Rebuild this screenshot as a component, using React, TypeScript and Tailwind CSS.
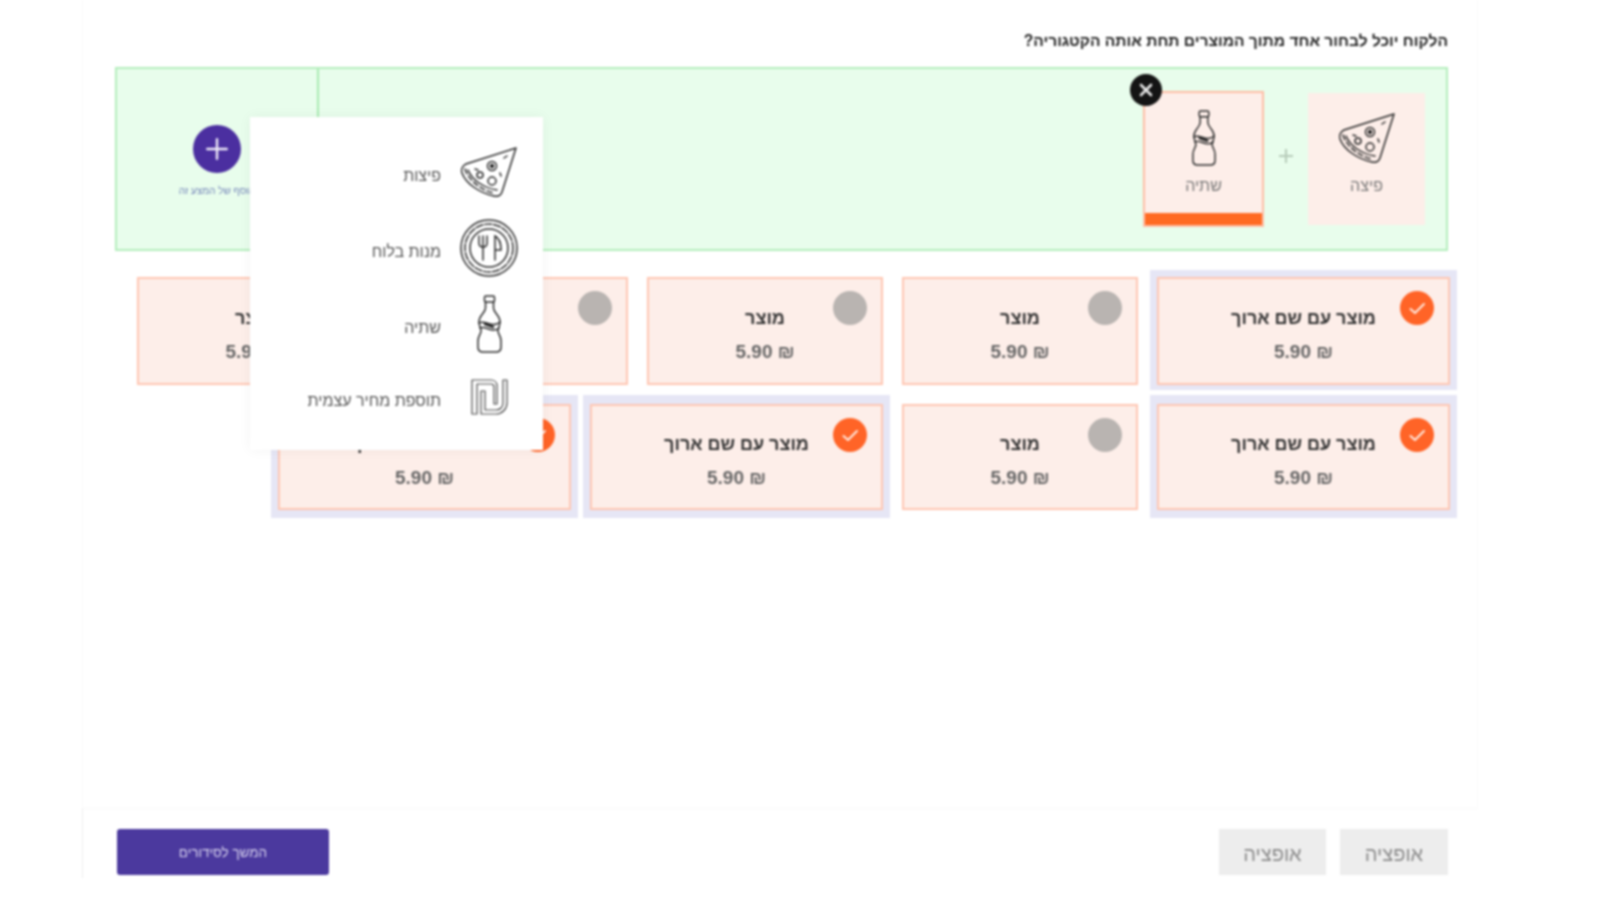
import React from 'react';

const PizzaIcon = ({ className }: { className?: string }) => (
    <svg viewBox="0 0 58 52" fill="none" stroke="#2b2b2b" strokeWidth="1.5" strokeLinejoin="round" strokeLinecap="round" className={className}>
        <path d="M56 2 L6 18 C2 20 1 24 2 27 C6 38 20 47 34 50 C38 51 41 49 42 46 Z" />
        <path d="M8 24 C12 34 24 42 37 44" />
        <path d="M5 23 C8 33 20 44 34 47" strokeDasharray="5 3" />
        <circle cx="32" cy="20" r="4.5" />
        <circle cx="32" cy="20" r="1.5" fill="#2b2b2b" />
        <circle cx="20" cy="29" r="3" />
        <circle cx="32" cy="35" r="4" />
        <path d="M44 12 l3 -2 M15 23 l3 1 M40 27 l1 3" />
    </svg>
);

const BottleIcon = ({ className }: { className?: string }) => (
    <svg viewBox="0 0 27 58" fill="none" stroke="#2b2b2b" strokeWidth="1.5" strokeLinejoin="round" strokeLinecap="round" className={className}>
        <rect x="8.5" y="1" width="10" height="6" rx="1.5" />
        <path d="M9.5 7 V13 C9.5 18 3 20 3 27 C3 31 5 33 5 36 C5 39 2 41 2 46 V52 C2 55 4 57 7 57 H20 C23 57 25 55 25 52 V46 C25 41 22 39 22 36 C22 33 24 31 24 27 C24 20 17.5 18 17.5 13 V7" />
        <path d="M3 28 C9 24 16 34 24 27 M4 33 C10 30 16 39 23 33" />
        <path d="M9 29 l8 3" strokeWidth="2.5" />
    </svg>
);

const PlateIcon = ({ className }: { className?: string }) => (
    <svg viewBox="0 0 60 58" fill="none" stroke="#2b2b2b" strokeWidth="1.5" strokeLinecap="round" className={className}>
        <circle cx="30" cy="29" r="28" />
        <circle cx="30" cy="29" r="24" strokeDasharray="7 2" />
        <circle cx="30" cy="29" r="19" />
        <path d="M20 17 V24 C20 27 22 28 24 28 C26 28 28 27 28 24 V17 M24 17 V41" />
        <path d="M36 41 V17 C40 19 42 24 42 31 H36" />
    </svg>
);

const ShekelIcon = ({ className }: { className?: string }) => (
    <svg viewBox="0 0 37 36" fill="none" stroke="#4a4a4a" strokeWidth="1.2" strokeLinejoin="round" className={className}>
        <path d="M1 35 V1 H20 C24 1 26 4 26 7 V25 H23 V8 C23 6 22 5 20 5 H6 V35 Z" />
        <path d="M36 1 V24 C36 30 31 35 25 35 H10 V12 H14 V31 H25 C29 31 32 28 32 24 V1 Z" />
    </svg>
);

const CheckBadge = ({ selected }: { selected: boolean }) =>
    selected ? (
        <span className="absolute right-[14px] top-[12px] flex h-[34px] w-[34px] items-center justify-center rounded-full bg-[#ff6427]">
            <svg viewBox="0 0 20 20" fill="none" stroke="#ffe9df" strokeWidth="2" strokeLinecap="round" strokeLinejoin="round" className="h-[20px] w-[20px]">
                <path d="M3.5 11 L8 15 L17 6" />
            </svg>
        </span>
    ) : (
        <span className="absolute right-[14px] top-[12px] h-[34px] w-[34px] rounded-full bg-[#b9b4b1]" />
    );

const ProductCard = ({ selected, rowClass, bodyClass }: { selected: boolean; rowClass: string; bodyClass: string }) => (
    <div className={`${rowClass} px-[7px] ${selected ? 'bg-[#e6e6f5]' : ''}`}>
        <div className={`relative flex h-full flex-col items-center border-2 border-[#ffc6b2] bg-[#fdeee9] ${bodyClass} ${selected ? 'w-[293px]' : 'w-[236px]'}`}>
            <CheckBadge selected={selected} />
            <span className="text-lg leading-6 font-semibold text-[#333333]">{selected ? 'מוצר עם שם ארוך' : 'מוצר'}</span>
            <span className="mt-[10px] text-[19px] leading-6 font-semibold text-[#666666]">₪ 5.90</span>
        </div>
    </div>
);

const menuItems = [
    { label: 'פיצות', icon: <PizzaIcon className="h-[52px] w-[58px]" />, rowClass: 'h-[76px]' },
    { label: 'מנות בלוח', icon: <PlateIcon className="h-[58px] w-[60px]" />, rowClass: 'h-[76px]' },
    { label: 'שתיה', icon: <BottleIcon className="h-[58px] w-[27px]" />, rowClass: 'h-[76px]' },
    { label: 'תוספת מחיר עצמית', icon: <ShekelIcon className="h-[36px] w-[37px]" />, rowClass: 'h-[70px]' },
];

const AddMenu = () => (
    <div className="absolute left-[250px] top-[117px] h-[333px] w-[293px] bg-white pr-[24px] pt-[17px] shadow-[0_0_12px_rgba(0,0,0,0.05)]">
        {menuItems.map((item) => (
            <div key={item.label} dir="rtl" className={`flex items-center ${item.rowClass}`}>
                <div className="flex w-[60px] justify-center">{item.icon}</div>
                <span className="mr-[18px] mt-[8px] text-base text-[#555555]">{item.label}</span>
            </div>
        ))}
    </div>
);

export default function App() {
    const firstRow = 'h-[120px] pb-[5px] pt-[7px]';
    const secondRow = 'h-[123px] pb-[8px] pt-[9px]';
    return (
        <div className="relative h-[900px] w-[1600px] overflow-hidden bg-white font-['Liberation_Sans',sans-serif] blur-[1px]">
            <main className="ml-[82px] h-[808px] w-[1396px] border-x border-[#fafafa] pl-[32px] pr-[29px] pt-[29px]">
                <h1 dir="rtl" className="text-[15.6px] leading-6 font-semibold text-[#222222]">
                    הלקוח יוכל לבחור אחד מתוך המוצרים תחת אותה הקטגוריה?
                </h1>
                <section className="mt-[14px] flex h-[184px] border-2 border-[#b4eebc] bg-[#e8fdec]">
                    <div className="flex w-[202px] shrink-0 flex-col items-center border-r-2 border-[#a8eab1] pt-[56px]">
                        <span className="flex h-[48px] w-[48px] items-center justify-center rounded-full bg-[#4b2fa0]">
                            <svg viewBox="0 0 24 24" fill="none" stroke="#eeeaf8" strokeWidth="2.2" strokeLinecap="round" className="h-[26px] w-[26px]">
                                <path d="M12 3 V21 M3 12 H21" />
                            </svg>
                        </span>
                        <span dir="rtl" className="mt-[10px] text-[10px] leading-4 text-[#7383b8]">הוסף של המצע זה</span>
                    </div>
                    <div dir="rtl" className="flex flex-1 items-center pr-[21px]">
                        <div className="flex h-[132px] w-[117px] flex-col items-center bg-[#fdeee9] pt-[19px]">
                            <PizzaIcon className="h-[52px] w-[58px]" />
                            <span className="mt-[10px] text-base text-[#777777]">פיצה</span>
                        </div>
                        <svg viewBox="0 0 16 16" fill="none" stroke="#b6cbb9" strokeWidth="2" className="mx-[14px] -mt-[6px] h-[16px] w-[16px]">
                            <path d="M8 1 V15 M1 8 H15" />
                        </svg>
                        <div className="relative flex h-[136px] w-[121px] flex-col items-center border-2 border-[#ffbda5] bg-[#fdeee9] pt-[17px]">
                            <BottleIcon className="h-[56px] w-[26px]" />
                            <span className="mt-[8px] text-base text-[#777777]">שתיה</span>
                            <span className="absolute inset-x-0 bottom-0 h-[12px] bg-[#ff6a22]" />
                            <span className="absolute -left-[15px] -top-[19px] flex h-[32px] w-[32px] items-center justify-center rounded-full bg-[#141414]">
                                <svg viewBox="0 0 16 16" fill="none" stroke="#e8e8e8" strokeWidth="2.6" strokeLinecap="round" className="h-[16px] w-[16px]">
                                    <path d="M3 3 L13 13 M13 3 L3 13" />
                                </svg>
                            </span>
                        </div>
                    </div>
                </section>
                <div dir="rtl" className="-mr-[9px] mt-[19px] flex flex-col">
                    <div className="flex gap-[5px]">
                        <ProductCard selected rowClass={firstRow} bodyClass="pt-[27px]" />
                        <ProductCard selected={false} rowClass={firstRow} bodyClass="pt-[27px]" />
                        <ProductCard selected={false} rowClass={firstRow} bodyClass="pt-[27px]" />
                        <ProductCard selected={false} rowClass={firstRow} bodyClass="pt-[27px]" />
                        <ProductCard selected={false} rowClass={firstRow} bodyClass="pt-[27px]" />
                    </div>
                    <div className="mt-[5px] flex gap-[5px]">
                        <ProductCard selected rowClass={secondRow} bodyClass="pt-[26px]" />
                        <ProductCard selected={false} rowClass={secondRow} bodyClass="pt-[26px]" />
                        <ProductCard selected rowClass={secondRow} bodyClass="pt-[26px]" />
                        <ProductCard selected rowClass={secondRow} bodyClass="pt-[26px]" />
                    </div>
                </div>
            </main>
            <footer className="ml-[82px] flex h-[70px] w-[1396px] items-start justify-between border-l border-t border-l-[#eeeeee] border-t-[#f9f9f9] pl-[34px] pr-[30px] pt-[20px]">
                <button className="h-[46px] w-[212px] rounded-[3px] bg-[#4b399e] pt-[3px] text-[13.5px] text-[#d8d3ee]">המשך לסידורים</button>
                <div className="flex gap-[14px]">
                    <button className="h-[46px] w-[107px] bg-[#ededed] pt-[3px] text-[20px] text-[#8a8a8a]">אופציה</button>
                    <button className="h-[46px] w-[108px] bg-[#ededed] pt-[3px] text-[20px] text-[#8a8a8a]">אופציה</button>
                </div>
            </footer>
            <AddMenu />
        </div>
    );
}
